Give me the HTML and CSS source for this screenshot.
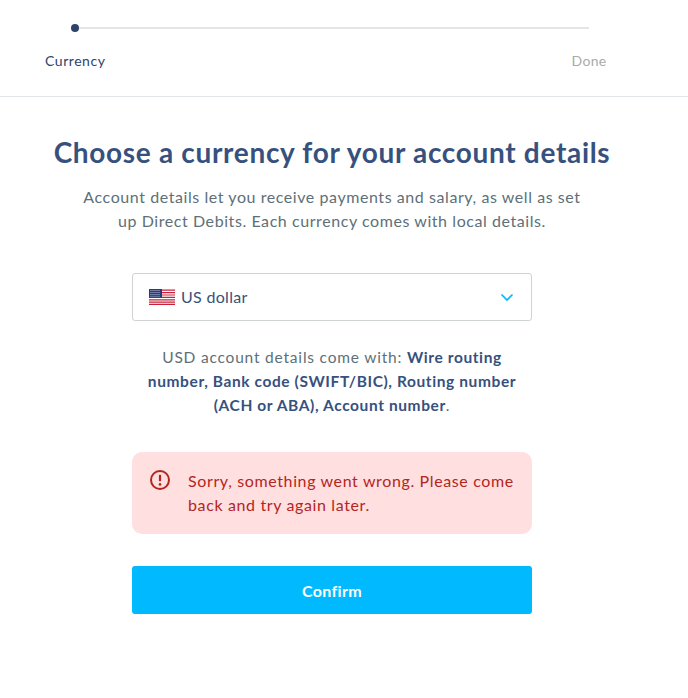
FILE: index.html
```html
<!DOCTYPE html>
<html lang="en">
<head>
<meta charset="utf-8">
<title>Choose a currency</title>
<link rel="stylesheet" href="styles.css">
</head>
<body>
<header class="stepper">
  <div class="track"><span class="dot"></span></div>
  <div class="labels">
    <span class="step active">Currency</span>
    <span class="step">Done</span>
  </div>
</header>
<main class="content">
  <h1>Choose a currency for your account details</h1>
  <p class="lead">Account details let you receive payments and salary, as well as set up Direct Debits. Each currency comes with local details.</p>
  <div class="select">
    <svg class="flag" viewBox="0 0 26 16" width="26" height="16" aria-hidden="true">
      <rect width="26" height="16" fill="#fff"/>
      <path d="M0 1.2h26M0 3.6h26M0 6h26M0 8.4h26M0 10.8h26M0 13.2h26M0 15.4h26" stroke="#c8203a" stroke-width="1.2"/>
      <rect width="13" height="8.6" fill="#2a3a78"/>
      <path d="M1.5 1.5h10M1.5 3.5h10M1.5 5.5h10M1.5 7.3h10" stroke="#dfe3f2" stroke-width=".8" stroke-dasharray="1 1"/>
    </svg>
    <span class="select-text">US dollar</span>
    <svg class="chev" viewBox="0 0 14 9" width="14" height="9" aria-hidden="true"><path d="M1.5 1.5l5.5 5.5 5.5-5.5" fill="none" stroke="#00b9ff" stroke-width="1.7"/></svg>
  </div>
  <p class="info">USD account details come with: <b>Wire routing number, Bank code (SWIFT/BIC), Routing number (ACH or ABA), Account number</b>.</p>
  <div class="alert">
    <svg class="alert-icon" viewBox="0 0 22 22" width="22" height="22" aria-hidden="true">
      <circle cx="11" cy="11" r="9" fill="none" stroke="#b3261e" stroke-width="2"/>
      <path d="M11 5.8v6.4" stroke="#b3261e" stroke-width="2.2"/>
      <circle cx="11" cy="15.4" r="1.3" fill="#b3261e"/>
    </svg>
    <p>Sorry, something went wrong. Please come back and try again later.</p>
  </div>
  <button class="confirm" type="button">Confirm</button>
</main>
</body>
</html>
```
FILE: styles.css
```css
* { box-sizing: border-box; }
html, body { margin: 0; padding: 0; }
body {
  width: 688px;
  height: 698px;
  background: #fff;
  font-family: "Lato", "Noto Sans", sans-serif;
  color: #37517e;
  overflow: hidden;
}
.stepper {
  height: 97px;
  border-bottom: 1px solid #e2e6e8;
  padding-top: 24px;
}
.track {
  margin-left: 71px;
  width: 518px;
  height: 2px;
  margin-top: 3px;
  background: #e2e6e8;
  position: relative;
}
.dot {
  position: absolute;
  left: 0;
  top: -3px;
  width: 8px;
  height: 8px;
  border-radius: 50%;
  background: #2e4369;
}
.labels {
  display: flex;
  justify-content: space-between;
  padding: 0 81.5px 0 45px;
  margin-top: 23px;
  font-size: 14px;
  line-height: 18px;
}
.step { color: #a8aaac; letter-spacing: .3px; }
.step.active { color: #2e4369; letter-spacing: .55px; }
.content {
  display: flex;
  flex-direction: column;
  align-items: center;
  padding-right: 24px;
}
h1 {
  margin: 35px 0 0;
  font-size: 28px;
  line-height: 40px;
  font-weight: 700;
  letter-spacing: .68px;
  color: #37517e;
  white-space: nowrap;
}
.lead {
  margin: 13px 0 0;
  width: 510px;
  text-align: center;
  font-size: 16px;
  line-height: 24px;
  color: #5d7079;
  letter-spacing: .57px;
}
.select {
  margin-top: 40px;
  width: 400px;
  height: 48px;
  border: 1px solid #d0d3d4;
  border-radius: 3px;
  display: flex;
  align-items: center;
  padding: 0 17px 0 16px;
  gap: 6px;
}
.select-text { font-size: 16px; line-height: 22px; letter-spacing: .3px; flex: 1; }
.info {
  margin: 24px 0 0;
  width: 376px;
  text-align: center;
  font-size: 15.5px;
  line-height: 24px;
  color: #5d7079;
  letter-spacing: .8px;
}
.info b { color: #37517e; font-weight: 700; letter-spacing: .6px; }
.alert {
  margin-top: 35px;
  width: 400px;
  height: 82px;
  background: #ffdfe0;
  border-radius: 10px;
  display: flex;
  gap: 17px;
  padding: 17px 16px 0 17px;
  color: #b3261e;
}
.alert-icon { flex: none; }
.alert p {
  margin: 0;
  font-size: 16px;
  line-height: 24px;
  letter-spacing: .63px;
}
.confirm {
  margin-top: 32px;
  width: 400px;
  height: 48px;
  padding: 2px 0 0;
  border: 0;
  border-radius: 3px;
  background: #00b9ff;
  color: #fff;
  font: 700 16px/24px "Lato", "Noto Sans", sans-serif;
  letter-spacing: .3px;
}
```
